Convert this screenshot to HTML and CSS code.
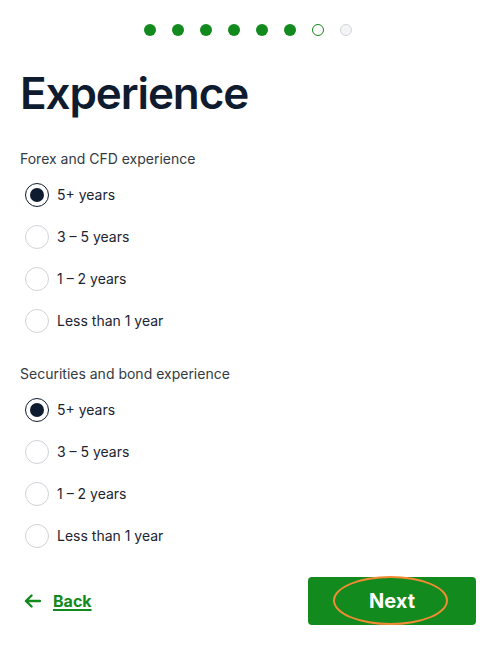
FILE: index.html
```html
<!DOCTYPE html>
<html lang="en">
<head>
<meta charset="utf-8">
<title>Experience</title>
<link rel="stylesheet" href="styles.css">
</head>
<body>
<main class="page">
  <div class="steps">
    <span class="dot done"></span>
    <span class="dot done"></span>
    <span class="dot done"></span>
    <span class="dot done"></span>
    <span class="dot done"></span>
    <span class="dot done"></span>
    <span class="dot current"></span>
    <span class="dot todo"></span>
  </div>

  <h1 class="title">Experience</h1>

  <section class="group">
    <div class="group-label">Forex and CFD experience</div>
    <div class="options">
      <label class="option"><span class="radio checked"></span><span>5+ years</span></label>
      <label class="option"><span class="radio"></span><span>3 – 5 years</span></label>
      <label class="option"><span class="radio"></span><span>1 – 2 years</span></label>
      <label class="option"><span class="radio"></span><span>Less than 1 year</span></label>
    </div>
  </section>

  <section class="group second">
    <div class="group-label">Securities and bond experience</div>
    <div class="options">
      <label class="option"><span class="radio checked"></span><span>5+ years</span></label>
      <label class="option"><span class="radio"></span><span>3 – 5 years</span></label>
      <label class="option"><span class="radio"></span><span>1 – 2 years</span></label>
      <label class="option"><span class="radio"></span><span>Less than 1 year</span></label>
    </div>
  </section>

  <div class="actions">
    <a class="back" href="#">
      <svg class="arrow" width="17" height="14" viewBox="0 0 17 14" aria-hidden="true">
        <path d="M16 7H2M7.5 1.5L2 7l5.5 5.5" fill="none" stroke="currentColor" stroke-width="2.4" stroke-linecap="round" stroke-linejoin="round"/>
      </svg>
      <span class="back-text">Back</span>
    </a>
    <button class="next" type="button">Next<span class="mark"></span></button>
  </div>
</main>
</body>
</html>
```

FILE: styles.css
```css
* { box-sizing: border-box; }

body {
  margin: 0;
  background: #ffffff;
  font-family: Inter, "Noto Sans", "Liberation Sans", sans-serif;
  color: #1c2431;
}

.page {
  padding: 24px 24px 0 20px;
}

.steps {
  display: flex;
  justify-content: center;
  gap: 16px;
  height: 12px;
}

.dot {
  width: 12px;
  height: 12px;
  border-radius: 50%;
}

.dot.done { background: #138a1d; }
.dot.current { background: #fff; border: 1.5px solid #138a1d; }
.dot.todo { background: #f3f4f6; border: 1px solid #d3d6db; }

.title {
  margin: 31px 0 0;
  font-size: 44px;
  line-height: 52px;
  font-weight: 600;
  letter-spacing: -1.1px;
  color: #0f1b2e;
}

.group {
  margin-top: 30px;
}

.group.second { margin-top: 31px; }

.group-label {
  font-size: 14px;
  line-height: 20px;
  color: #333a44;
}

.options {
  margin-top: 14px;
  display: flex;
  flex-direction: column;
  gap: 18px;
}

.option {
  display: flex;
  align-items: center;
  gap: 8px;
  padding-left: 5px;
  height: 24px;
  font-size: 14px;
  line-height: 20px;
  color: #1c2431;
}

.radio {
  width: 24px;
  height: 24px;
  border-radius: 50%;
  border: 1px solid #cfd3d8;
  background: #fff;
  display: flex;
  align-items: center;
  justify-content: center;
  flex: none;
}

.radio.checked {
  border: 1.6px solid #0f1b2e;
}

.radio.checked::after {
  content: "";
  width: 14px;
  height: 14px;
  border-radius: 50%;
  background: #0f1b2e;
}

.actions {
  margin-top: 29px;
  display: flex;
  justify-content: space-between;
  align-items: center;
}

.back {
  display: flex;
  align-items: center;
  gap: 12px;
  padding-left: 4px;
  color: #138a1d;
  text-decoration: none;
  font-size: 16px;
  font-weight: 700;
}

.arrow { display: block; }

.back-text {
  text-decoration: underline;
  text-underline-offset: 2px;
  text-decoration-thickness: 1.5px;
}

.next {
  position: relative;
  width: 168px;
  height: 48px;
  border: 0;
  border-radius: 4px;
  background: #138a1d;
  color: #fff;
  font-family: inherit;
  font-size: 20px;
  font-weight: 700;
  cursor: pointer;
}

.mark {
  position: absolute;
  left: 25px;
  top: -1px;
  width: 115px;
  height: 49px;
  border: 2.5px solid #f38b34;
  border-radius: 50%;
  pointer-events: none;
}
```
